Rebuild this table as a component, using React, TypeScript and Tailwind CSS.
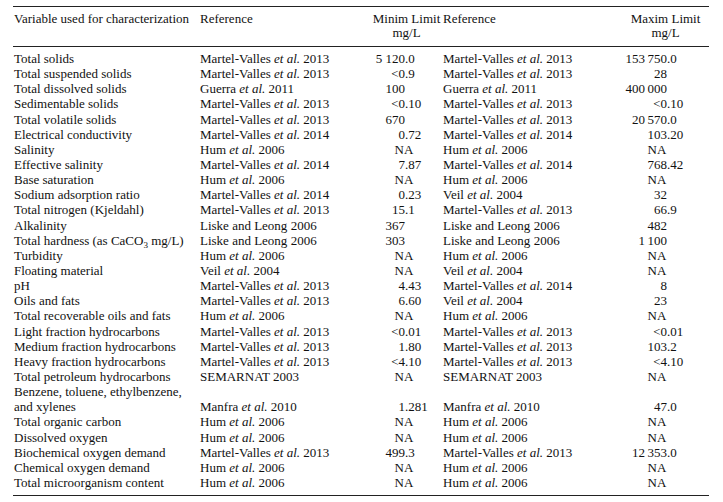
type Ref = { name: string; etal?: boolean; year: string }

interface Row {
    variable: React.ReactNode
    minRef: Ref
    min: string
    maxRef: Ref
    max: string
    twoLine?: boolean
}

const MV13: Ref = { name: "Martel-Valles", etal: true, year: "2013" }
const MV14: Ref = { name: "Martel-Valles", etal: true, year: "2014" }
const HUM: Ref = { name: "Hum", etal: true, year: "2006" }
const VEIL: Ref = { name: "Veil", etal: true, year: "2004" }
const GUERRA: Ref = { name: "Guerra", etal: true, year: "2011" }
const LISKE: Ref = { name: "Liske and Leong", year: "2006" }
const SEM: Ref = { name: "SEMARNAT", year: "2003" }
const MANFRA: Ref = { name: "Manfra", etal: true, year: "2010" }

const rows: Row[] = [
    { variable: "Total solids", minRef: MV13, min: "5 120.0", maxRef: MV13, max: "153\u2009750.0" },
    { variable: "Total suspended solids", minRef: MV13, min: "<0.9", maxRef: MV13, max: "28" },
    { variable: "Total dissolved solids", minRef: GUERRA, min: "100", maxRef: GUERRA, max: "400\u2009000" },
    { variable: "Sedimentable solids", minRef: MV13, min: "<0.10", maxRef: MV13, max: "<0.10" },
    { variable: "Total volatile solids", minRef: MV13, min: "670", maxRef: MV13, max: "20\u2009570.0" },
    { variable: "Electrical conductivity", minRef: MV14, min: "0.72", maxRef: MV14, max: "103.20" },
    { variable: "Salinity", minRef: HUM, min: "NA", maxRef: HUM, max: "NA" },
    { variable: "Effective salinity", minRef: MV14, min: "7.87", maxRef: MV14, max: "768.42" },
    { variable: "Base saturation", minRef: HUM, min: "NA", maxRef: HUM, max: "NA" },
    { variable: "Sodium adsorption ratio", minRef: MV14, min: "0.23", maxRef: VEIL, max: "32" },
    { variable: "Total nitrogen (Kjeldahl)", minRef: MV13, min: "15.1", maxRef: MV13, max: "66.9" },
    { variable: "Alkalinity", minRef: LISKE, min: "367", maxRef: LISKE, max: "482" },
    {
        variable: (
            <>
                Total hardness (as CaCO<span className="text-[9px] leading-[0] relative top-[3px]">3</span> mg/L)
            </>
        ),
        minRef: LISKE, min: "303", maxRef: LISKE, max: "1\u2009100",
    },
    { variable: "Turbidity", minRef: HUM, min: "NA", maxRef: HUM, max: "NA" },
    { variable: "Floating material", minRef: VEIL, min: "NA", maxRef: VEIL, max: "NA" },
    { variable: "pH", minRef: MV13, min: "4.43", maxRef: MV14, max: "8" },
    { variable: "Oils and fats", minRef: MV13, min: "6.60", maxRef: VEIL, max: "23" },
    { variable: "Total recoverable oils and fats", minRef: HUM, min: "NA", maxRef: HUM, max: "NA" },
    { variable: "Light fraction hydrocarbons", minRef: MV13, min: "<0.01", maxRef: MV13, max: "<0.01" },
    { variable: "Medium fraction hydrocarbons", minRef: MV13, min: "1.80", maxRef: MV13, max: "103.2" },
    { variable: "Heavy fraction hydrocarbons", minRef: MV13, min: "<4.10", maxRef: MV13, max: "<4.10" },
    { variable: "Total petroleum hydrocarbons", minRef: SEM, min: "NA", maxRef: SEM, max: "NA" },
    {
        variable: (
            <>
                Benzene, toluene, ethylbenzene,
                <br />
                and xylenes
            </>
        ),
        minRef: MANFRA, min: "1.281", maxRef: MANFRA, max: "47.0", twoLine: true,
    },
    { variable: "Total organic carbon", minRef: HUM, min: "NA", maxRef: HUM, max: "NA" },
    { variable: "Dissolved oxygen", minRef: HUM, min: "NA", maxRef: HUM, max: "NA" },
    { variable: "Biochemical oxygen demand", minRef: MV13, min: "499.3", maxRef: MV13, max: "12\u2009353.0" },
    { variable: "Chemical oxygen demand", minRef: HUM, min: "NA", maxRef: HUM, max: "NA" },
    { variable: "Total microorganism content", minRef: HUM, min: "NA", maxRef: HUM, max: "NA" },
]

function RefCell({ r }: { r: Ref }) {
    return (
        <div className="whitespace-nowrap">
            {r.name} {r.etal && <i>et al.</i>} {r.year}
        </div>
    )
}

// decimal aligned number: integer part right aligned, fraction hangs after
function MinNum({ v }: { v: string }) {
    if (v === "NA") return <div className="w-[68px] text-center">NA</div>
    const [int, frac] = v.split(".")
    return (
        <div className="flex whitespace-nowrap">
            <span className="w-[35px] text-right">{int}</span>
            {frac !== undefined && <span>.{frac}</span>}
        </div>
    )
}

function MaxNum({ v }: { v: string }) {
    if (v === "NA") return <div className="w-[70px] text-center">NA</div>
    const [int, frac] = v.split(".")
    return (
        <div className="flex whitespace-nowrap">
            <span className="w-[45px] text-right">{int}</span>
            {frac !== undefined && <span>.{frac}</span>}
        </div>
    )
}

export default function App() {
    return (
        <div className="w-[723px] h-[502px] bg-white text-[#111] font-[family-name:Liberation_Serif,serif] text-[13px]">
            <div className="ml-[13px] mt-[6px] w-[696px] border-t border-b border-[#222]">
                <div className="grid grid-cols-[187px_170px_73px_179px_87px] border-b border-[#222] pt-[5px] pb-[6px] leading-[14px]">
                    <div className="pl-[1px]">Variable used for characterization</div>
                    <div>Reference</div>
                    <div className="text-center">Minim Limit<br />mg/L</div>
                    <div>Reference</div>
                    <div className="text-center">Maxim Limit<br />mg/L</div>
                </div>
                <div className="pt-[4px] pb-[5px] leading-[15.14px]">
                    {rows.map((row, i) => (
                        <div
                            key={i}
                            className={row.twoLine
                                ? "grid grid-cols-[187px_170px_73px_179px_87px] items-end"
                                : "grid grid-cols-[187px_170px_73px_179px_87px]"}
                        >
                            <div className="pl-[1px] whitespace-nowrap">{row.variable}</div>
                            <RefCell r={row.minRef} />
                            <MinNum v={row.min} />
                            <RefCell r={row.maxRef} />
                            <MaxNum v={row.max} />
                        </div>
                    ))}
                </div>
            </div>
        </div>
    )
}
